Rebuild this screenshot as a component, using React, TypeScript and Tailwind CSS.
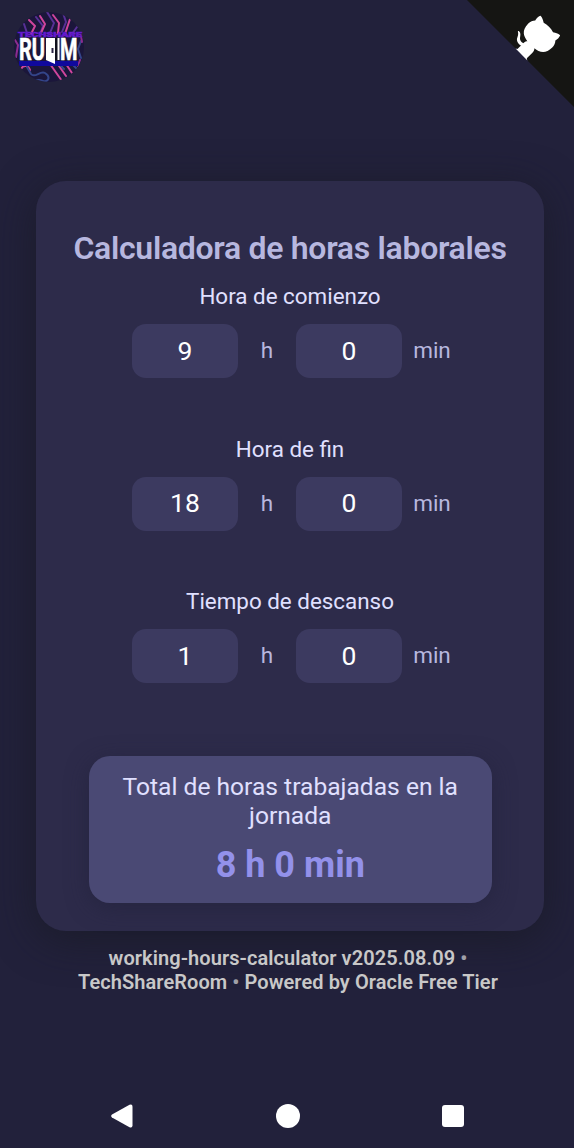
import React from "react";

const FONT = "font-['Roboto','Liberation_Sans',sans-serif]";

function Logo() {
  return (
    <svg className="ml-[12px] mt-[10px] block h-[74px] w-[74px]" viewBox="12 10 74 74">
      <defs>
        <clipPath id="disc">
          <circle cx="49" cy="47" r="35" />
        </clipPath>
      </defs>
      <g clipPath="url(#disc)">
        <rect x="12" y="10" width="74" height="74" fill="#1b163b" />
        <g fill="none" strokeWidth="2" strokeLinejoin="round" strokeLinecap="round">
          <path stroke="#573096" d="M36 17l7 9-3 8M47 12l7 11-4 10M63 13l3 9-4 10M77 27l-5 7M24 24l3 9" />
          <path stroke="#cf459c" d="M29 20l6 6-4 8M40 16l5 8-4 9M53 15l6 8-1 10M70 19l-5 15" />
          <path stroke="#cf459c" d="M50 64l12 17M57 63l9 13M66 64l6 9M21 69c3-5 8-3 9 1" />
          <path stroke="#34458a" d="M27 67l4 7c4 5 9-4 14-1s4 7 1 8-6-3-11 0M73 65l5 5M60 65l4 4M81 41l-3 8 3 9" />
          <path stroke="#8c2c91" d="M15 40l3 5-2 12M81 36l1 6M80 60l-2 6" />
        </g>
        <path d="M19 61h59v5H19z" fill="#10099c" />
      </g>
      <text x="18" y="37" textLength="64" lengthAdjust="spacingAndGlyphs" fontFamily="Roboto" fontWeight="900" fontSize="8" fill="#7620dc" stroke="#5b17c4" strokeWidth="0.6">
        TECHSHARE
      </text>
      <g fill="#fff" stroke="#fff" strokeWidth="0.6" fontFamily="Roboto" fontWeight="700" fontSize="31">
        <text x="19" y="60" textLength="26" lengthAdjust="spacingAndGlyphs">RU</text>
        <text x="60" y="60" textLength="17.500" lengthAdjust="spacingAndGlyphs">M</text>
      </g>
      <path d="M46 38h12v22H46z" fill="#10101c" />
      <path d="M46 38h9v26l-9-4zM57.500 38h2v22h-2z" fill="#fff" />
      <path d="M51.500 48h2v5h-2z" fill="#2a2444" />
    </svg>
  );
}

function GithubCorner() {
  return (
    <svg className="absolute -top-[2px] left-[465px] h-[110px] w-[110px]" viewBox="0 0 250 250" aria-hidden="true">
      <path fill="#151513" d="M0,0 L115,115 L130,115 L142,142 L250,250 L250,0 Z" />
      <path
        fill="#fff"
        d="M128.3,109.0 C113.8,99.7 119.0,89.6 119.0,89.6 C122.0,82.7 120.5,78.6 120.5,78.6 C119.2,72.0 123.4,76.3 123.4,76.3 C127.3,80.9 125.5,87.3 125.5,87.3 C122.9,97.6 130.6,101.9 134.4,103.2"
      />
      <path
        fill="#fff"
        d="M115.0,115.0 C114.9,115.1 118.7,116.5 119.8,115.4 L133.7,101.6 C136.9,99.2 139.9,98.4 142.2,98.6 C133.8,88.0 127.5,74.4 143.8,58.0 C148.5,53.4 154.0,51.2 159.7,51.0 C160.3,49.4 163.2,43.6 171.4,40.1 C171.4,40.1 176.1,42.5 178.8,56.2 C183.1,58.6 187.2,61.8 190.9,65.4 C194.5,69.0 197.7,73.2 200.1,77.6 C213.8,80.2 216.3,84.9 216.3,84.9 C212.7,93.1 206.9,96.0 205.4,96.6 C205.1,102.4 203.0,107.8 198.3,112.5 C181.9,128.9 168.3,122.5 157.7,114.1 C157.9,116.9 156.7,120.9 152.7,124.9 L141.0,136.5 C139.8,137.7 141.6,141.9 141.8,141.8 Z"
      />
    </svg>
  );
}

function TimeField({ label, hours, minutes }: { label: string; hours: string; minutes: string }) {
  const box = "flex h-[54px] w-[106px] items-center justify-center rounded-[14px] bg-[#3c3a60] pb-px text-[26.5px] text-white";
  const unit = "text-center text-[22.5px] text-[#b7b7df]";
  return (
    <div className="flex h-[152.6px] flex-col">
      <div className="h-[43px] text-center text-[22.4px] leading-[30px] text-[#e0e0ff]">{label}</div>
      <div className="flex items-center pl-[96px]">
        <div className={box}>{hours}</div>
        <span className={`w-[58px] ${unit}`}>h</span>
        <div className={box}>{minutes}</div>
        <span className={`w-[60px] ${unit}`}>min</span>
      </div>
    </div>
  );
}

export default function App() {
  return (
    <div className={`relative flex h-[1148px] w-[574px] flex-col overflow-hidden bg-[#22213b] ${FONT}`}>
      <header className="h-[181px] shrink-0">
        <Logo />
        <GithubCorner />
      </header>

      <main className="ml-[36px] flex h-[750px] w-[508px] shrink-0 flex-col rounded-[30px] bg-[#2d2b4a] pt-[46px] shadow-[0_8px_42px_rgba(24,25,34,0.7)]">
        <h1 className="h-[54px] whitespace-nowrap text-center text-[32px] font-semibold leading-[42px] tracking-[-0.3px] text-[#b7b7df]">
          Calculadora de horas laborales
        </h1>
        <TimeField label="Hora de comienzo" hours="9" minutes="0" />
        <TimeField label="Hora de fin" hours="18" minutes="0" />
        <TimeField label="Tiempo de descanso" hours="1" minutes="0" />
        <section className="ml-[52.500px] mt-[17.200px] h-[147px] w-[403.500px] rounded-[21px] bg-[#4a4974] pt-[16px] text-center shadow-[0_5px_22px_rgba(34,33,59,0.6)]">
          <p className="text-[24.6px] leading-[29px] text-[#e0e0ff]">
            Total de horas trabajadas en la
            <br />
            jornada
          </p>
          <p className="mt-[13px] text-[36px] font-bold leading-[44px] text-[#9391ea]">8 h 0 min</p>
        </section>
      </main>

      <footer className="mt-[16px] h-[136px] w-[576px] shrink-0 text-center text-[20px] font-semibold leading-[23.500px] tracking-[0.07px] text-[#c8c8c8]">
        working-hours-calculator v2025.08.09 <span className="text-[#a0a0a8]">•</span>
        <br />
        TechShareRoom <span className="text-[#a0a0a8]">•</span> Powered by Oracle Free Tier
      </footer>

      <nav className="flex h-[65px] items-center">
        <svg className="ml-[110px] h-6 w-6" viewBox="0 0 24 24" fill="#fff">
          <path d="M19.500 .8Q22.500 -.4 22.500 2.800V21.200Q22.500 24.400 19.500 23.200L2 13.500Q.3 12 2 10.500Z" />
        </svg>
        <div className="ml-[142px] h-6 w-6 rounded-full bg-white" />
        <div className="ml-[142px] h-[22px] w-[22px] rounded-[3px] bg-white" />
      </nav>
    </div>
  );
}
